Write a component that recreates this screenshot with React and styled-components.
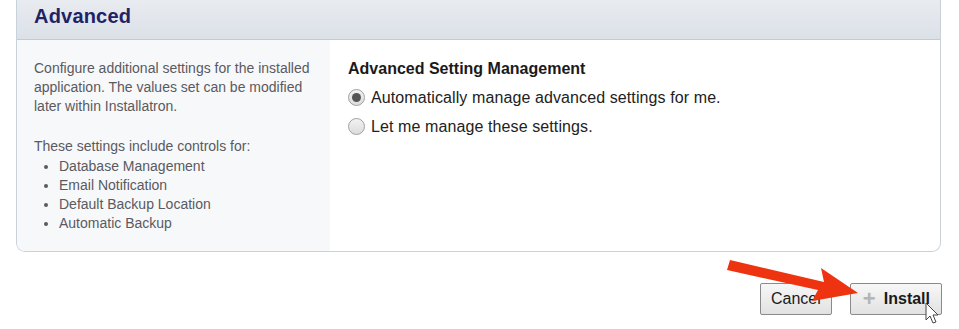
import React, { useState } from "react";
import styled, { createGlobalStyle } from "styled-components";

const Global = createGlobalStyle`
  body {
    margin: 0;
    background: #ffffff;
    font-family: "Liberation Sans", Arial, sans-serif;
  }
`;

const Page = styled.div`
  position: relative;
  width: 959px;
  height: 329px;
  overflow: hidden;
`;

const Panel = styled.div`
  margin-left: 16px;
  width: 923px;
  border: 1px solid #c9d1db;
  border-top: none;
  border-radius: 0 0 9px 9px;
  overflow: hidden;
`;

const Header = styled.div`
  height: 40px;
  box-sizing: border-box;
  padding: 0 0 7px 17px;
  display: flex;
  align-items: center;
  background: linear-gradient(to bottom, #e8ebf0, #dce1e8);
  border-bottom: 1px solid #c2cad4;
`;

const Title = styled.h2`
  margin: 0;
  font-size: 20px;
  font-weight: bold;
  color: #1f2266;
  letter-spacing: 0.2px;
`;

const Body = styled.div`
  display: flex;
  height: 211px;
`;

const Side = styled.div`
  width: 313px;
  box-sizing: border-box;
  background: #f7f8fa;
  padding: 19px 16px 0 17px;
  color: #5a5a5f;
  font-size: 14px;
  line-height: 19px;
`;

const Para = styled.p`
  margin: 0 0 21px;
`;

const List = styled.ul`
  margin: 1px 0 0;
  padding-left: 25px;
`;

const Main = styled.div`
  flex: 1;
  padding: 20px 18px 0;
`;

const Heading = styled.div`
  font-size: 16px;
  font-weight: bold;
  color: #1a1a1a;
  margin-bottom: 5px;
`;

const Option = styled.label`
  display: flex;
  align-items: center;
  gap: 6px;
  font-size: 16px;
  letter-spacing: 0.1px;
  color: #222;
  height: 29px;
  cursor: pointer;
`;

const Radio = styled.span`
  width: 17px;
  height: 17px;
  box-sizing: border-box;
  border-radius: 50%;
  border: 1px solid #a0a0a0;
  background: linear-gradient(to bottom, #f2f2f2, #dcdcdc);
  display: flex;
  align-items: center;
  justify-content: center;
  &::after {
    content: "";
    width: 9px;
    height: 9px;
    border-radius: 50%;
    background: ${(p) => (p.$checked ? "#555" : "transparent")};
  }
`;

const Actions = styled.div`
  display: flex;
  justify-content: flex-end;
  gap: 18px;
  width: 942px;
  margin-top: 31px;
`;

const Button = styled.button`
  height: 32px;
  padding: ${(p) => (p.$primary ? "0 11px 0 12px" : "0 10px")};
  display: flex;
  align-items: center;
  gap: 8px;
  border: 1px solid #8a8a8a;
  border-radius: 2px;
  background: linear-gradient(to bottom, #f7f7f7, #e2e2e2);
  font-family: "Liberation Sans", Arial, sans-serif;
  font-size: 16px;
  font-weight: ${(p) => (p.$primary ? "bold" : "normal")};
  color: #1a1a1a;
`;

const Plus = styled.span`
  color: #b5b5b5;
  font-size: 22px;
  font-weight: bold;
  line-height: 1;
  width: 13px;
  text-align: center;
`;

const Overlay = styled.svg`
  position: absolute;
  left: 0;
  top: 0;
  pointer-events: none;
`;

export default function App() {
  const [choice, setChoice] = useState("auto");
  return (
    <Page>
      <Global />
      <Panel>
        <Header>
          <Title>Advanced</Title>
        </Header>
        <Body>
          <Side>
            <Para>
              Configure additional settings for the installed application. The
              values set can be modified later within Installatron.
            </Para>
            These settings include controls for:
            <List>
              <li>Database Management</li>
              <li>Email Notification</li>
              <li>Default Backup Location</li>
              <li>Automatic Backup</li>
            </List>
          </Side>
          <Main>
            <Heading>Advanced Setting Management</Heading>
            <Option onClick={() => setChoice("auto")}>
              <Radio $checked={choice === "auto"} />
              Automatically manage advanced settings for me.
            </Option>
            <Option onClick={() => setChoice("manual")}>
              <Radio $checked={choice === "manual"} />
              Let me manage these settings.
            </Option>
          </Main>
        </Body>
      </Panel>
      <Actions>
        <Button>Cancel</Button>
        <Button $primary>
          <Plus>+</Plus>
          Install
        </Button>
      </Actions>
      <Overlay width="959" height="329">
        <polygon
          points="730,260 824,282 821,268 858,293 812,301 818,290 727,270"
          fill="#ee3311"
        />
        <path
          d="M926 303 L926 320 L930 316 L933 323 L936 322 L933 315 L938 315 Z"
          fill="#ffffff"
          stroke="#444"
          strokeWidth="1"
          strokeLinejoin="round"
        />
      </Overlay>
    </Page>
  );
}
